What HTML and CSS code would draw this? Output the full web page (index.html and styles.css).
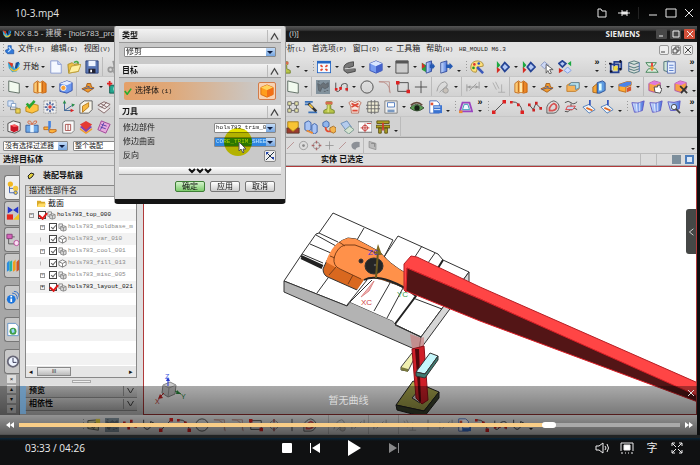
FILE: index.html
```html
<!DOCTYPE html>
<html lang="zh-CN">
<head>
<meta charset="utf-8">
<title>10-3.mp4</title>
<link rel="stylesheet" href="styles.css">
</head>
<body>
<svg class="sprite" aria-hidden="true">
<defs>
<linearGradient id="gOr" x2="1"><stop offset="0" stop-color="#ffd884"/><stop offset="1" stop-color="#e97813"/></linearGradient>
<linearGradient id="gBl" x2="1"><stop offset="0" stop-color="#cfe2ff"/><stop offset="1" stop-color="#4a74dc"/></linearGradient>
</defs>
<symbol id="nx" viewBox="0 0 16 16"><path d="M1 3l5 1 3 6 3-8 3 2-4 9-5 1-4-5z" fill="#35a7d8"/><path d="M1 2l6 2-1 5z" fill="#d93b24"/><path d="M3 8c1 6 8 8 12 0l-3 1-4 3z" fill="#f3c22f"/><path d="M10 3l4-1-3 8-2-1z" fill="#164b98"/></symbol>
<symbol id="part" viewBox="0 0 16 16"><path d="M5 1h5v5l4 2v6H4L1 11V8l4-1z" fill="#3279d8" stroke="#184fa0"/><path d="M6 3l3 4-4 4" fill="none" stroke="#bfe0ff" stroke-width="2"/></symbol>
<symbol id="new" viewBox="0 0 16 16"><path d="M2 1h8l4 4v10H2z" fill="#f4f8ff" stroke="#8698cf"/><path d="M10 1v4h4" fill="#c9d6f5" stroke="#8698cf"/></symbol>
<symbol id="open" viewBox="0 0 16 16"><path d="M1 5l5-2 2 2 5-1v9l-11 2z" fill="#eec146" stroke="#a98b26"/><path d="M2 15l3-8 11-2-3 8z" fill="#fff0a0" stroke="#b99a36"/><path d="M8 3q4-3 5 1" fill="none" stroke="#49a847" stroke-width="2"/></symbol>
<symbol id="save" viewBox="0 0 16 16"><path d="M1 1h14v14H1z" fill="#5a77b5" stroke="#293f78"/><path d="M4 1h8v6H4z" fill="#eef4ff"/><path d="M4 10h8v5H4z" fill="#223"/><path d="M6 11h2v3H6z" fill="#fff"/></symbol>
<symbol id="cut" viewBox="0 0 16 16"><path d="M7 1l2 9M13 3L6 10" stroke="#999" stroke-width="2"/><circle cx="4" cy="11" r="2.500" fill="none" stroke="#999" stroke-width="2"/><circle cx="10" cy="13" r="2" fill="none" stroke="#999" stroke-width="2"/></symbol>
<symbol id="stamp" viewBox="0 0 16 16"><path d="M5 2h6v3l-1 1v4l4 2v3H2v-3l4-2V6L5 5z" fill="#b8c548" stroke="#71812b"/><path d="M4 2h8v3H4z" fill="#d86b4e"/><path d="M7 6v8" stroke="#f8f5a0"/></symbol>
<symbol id="fit" viewBox="0 0 16 16"><path d="M0 1h16v14H0z" fill="#2667c4"/><path d="M1 4h14v10H1z" fill="#f7faff"/><path d="M4 6l8 6M12 6l-8 6" stroke="#e64b33" stroke-width="2" stroke-dasharray="3 4"/></symbol>
<symbol id="wedge" viewBox="0 0 16 16"><path d="M1 8q1-5 11-6v5l-6 2 8 1v3l-9 2-4-3z" fill="#777" stroke="#444"/><path d="M2 10l12-1" stroke="#ddd"/></symbol>
<symbol id="cube" viewBox="0 0 16 16"><path d="M1 4l7-3 7 3v8l-7 3-7-3z" fill="#789cf0" stroke="#3650b2"/><path d="M1 4l7-3 7 3-7 3z" fill="#d9e6ff"/><path d="M8 7l7-3v8l-7 3z" fill="#4462ca"/></symbol>
<symbol id="frame" viewBox="0 0 16 16"><path d="M1 1h14v14H1z" fill="#ccc" stroke="#444" stroke-width="1"/><path d="M1 1h14v3H1z" fill="#555"/></symbol>
<symbol id="clipr" viewBox="0 0 16 16"><path d="M1 3l5 3v8l-5-3z" fill="#2c9e3a"/><path d="M1 3l4 4-4 3z" fill="#d72c24"/><path d="M6 3l6-2v12l-6 2z" fill="url(#gBl)" stroke="#2f4897"/><path d="M10 5h3V3l3 4-3 4V9h-3z" fill="#2459b2"/></symbol>
<symbol id="clip" viewBox="0 0 16 16"><path d="M2 3l7-2v12l-7 2z" fill="url(#gBl)" stroke="#2f4897"/><path d="M8 5h4V3l4 4-4 4V9H8z" fill="#2459b2"/></symbol>
<symbol id="palette" viewBox="0 0 16 16"><path d="M1 7q1-6 8-6 7 1 6 6l-6 1-2 6Q0 14 1 7" fill="#ffe079" stroke="#a88a39"/><circle cx="5" cy="5" r="1.500" fill="#d33"/><circle cx="10" cy="4" r="1.500" fill="#25b"/><circle cx="4" cy="9" r="1.500" fill="#292"/><path d="M8 8l7 7" stroke="#3b59b9" stroke-width="3"/></symbol>
<symbol id="play1" viewBox="0 0 16 16"><path d="M1 1l4 5-4 4z" fill="#1aa840"/><path d="M1 8l4 3-4 4z" fill="#d52b21"/><path d="M6 8l4-5 5 5-5 5z" fill="#b4c9f5" stroke="#244394" stroke-width="2"/></symbol>
<symbol id="pick" viewBox="0 0 16 16"><path d="M1 6l4-4 5 4-5 4z" fill="#cdd8f6" stroke="#8492bd"/><path d="M7 5v10l2-3 2 4 2-1-2-4h4z" fill="#fff" stroke="#555"/></symbol>
<symbol id="swap" viewBox="0 0 16 16"><path d="M1 4l4-3 4 3-4 4z" fill="#b4c9f5" stroke="#244394" stroke-width="2"/><path d="M7 12l4-4 4 4-4 3z" fill="#cfddff" stroke="#7d9be0"/><path d="M15 1v6l-4-3z" fill="#1aa840"/><path d="M1 9l5 3-5 3z" fill="#d52b21"/></symbol>
<symbol id="sel" viewBox="0 0 16 16"><path d="M2 5h9v9H2zM6 2h8v8H6z" fill="none" stroke="#233f8e" stroke-width="2"/><path d="M5 7h5v5H5z" fill="#f0dc41"/><path d="M0 4h3M1 13h3M13 0v3M13 9v3" stroke="#112" stroke-width="2"/></symbol>
<symbol id="layers" viewBox="0 0 16 16"><path d="M2 3l6-2 6 2-6 2zM2 7l6 2 6-2M2 10l6 2 6-2M2 13l6 2 6-2" fill="#d4e6db" stroke="#476b70" stroke-width="1"/><path d="M2 3v10M14 3v10" stroke="#3a66aa"/></symbol>
<symbol id="layer2" viewBox="0 0 16 16"><path d="M1 3h12l-3 4H4zM4 10h8l3 4H1z" fill="#dcefdd" stroke="#3a7e51"/><path d="M8 3v9" stroke="#e33" stroke-width="2"/><circle cx="8" cy="9" r="2" fill="#e9a92e"/></symbol>
<symbol id="doc" viewBox="0 0 16 16"><path d="M1 2l6-1v13l-6-2z" fill="#cfe6d8" stroke="#476b70"/><path d="M5 2h9v13H5z" fill="#e8f0ff" stroke="#4f68ad"/><path d="M7 6h5M7 9h5M7 12h5" stroke="#4c73c9"/></symbol>
<symbol id="docr" viewBox="0 0 16 16"><path d="M2 1h8l3 3v11H2z" fill="#fff" stroke="#4265b8"/><path d="M6 6h10v9H6z" fill="#3a73d1"/><path d="M7 8h7M7 11h7" stroke="#fff"/><path d="M3 3h3v3H3z" fill="#e35335"/></symbol>
<symbol id="sheet" viewBox="0 0 16 16"><path d="M2 1l12 3v11L2 13z" fill="#f2faef" stroke="#55645a" stroke-width="1"/></symbol>
<symbol id="obox" viewBox="0 0 16 16"><path d="M1 4l4-3 3 2 3-2 4 3v10l-4 1-3-1-3 1-4-1z" fill="url(#gOr)" stroke="#c16818"/><path d="M5 2v12M11 2v12" stroke="#b65c13"/><path d="M7 3h2v11H7z" fill="#fff2bd"/></symbol>
<symbol id="bcube" viewBox="0 0 16 16"><path d="M1 4l8-3 6 2v9l-6 3-8-2z" fill="#6d98ef" stroke="#2d4ba8"/><path d="M1 4l8-3 6 2-6 3z" fill="#e0ebff"/><circle cx="5" cy="9" r="3" fill="#f6a136" stroke="#fff"/></symbol>
<symbol id="hump" viewBox="0 0 16 16"><path d="M1 10l5-2 1-4h4l1 4 3 1-7 5z" fill="#f19b2e" stroke="#a65b16"/><path d="M2 11l6-2 6 1M7 7l3 1" stroke="#36549e" stroke-width="1" fill="none"/></symbol>
<symbol id="teal" viewBox="0 0 16 16"><path d="M3 6h12v9H3z" fill="#26a58f" stroke="#0e594e"/><path d="M3 1v6M0 4h6" stroke="#d22" stroke-width="2"/><circle cx="10" cy="10" r="3" fill="#8fe0c8"/></symbol>
<symbol id="patt" viewBox="0 0 16 16"><path d="M0 0h16v16H0z" fill="#82929d"/><path d="M2 4l3 2 3-3 3 2 3-2v5l-4 2-3-2-2 5-2-1zM2 2h2M12 12h2M9 13h2" fill="#6a7278" stroke="#59626a"/></symbol>
<symbol id="spl" viewBox="0 0 16 16"><path d="M2 3v7q0 4 3 3t3-5 4-4 3 3v6" fill="none" stroke="#444" stroke-width="1"/><path d="M1 9h3v3H1zM6 8h3v3H6zM13 9h3v3h-3z" fill="#d22"/></symbol>
<symbol id="circ" viewBox="0 0 16 16"><circle cx="8" cy="8" r="7" fill="none" stroke="#444" stroke-width="1"/></symbol>
<symbol id="arc" viewBox="0 0 16 16"><path d="M1 2q12-1 13 13M1 2h12v12" fill="none" stroke="#b98d87" stroke-width="1"/></symbol>
<symbol id="rect" viewBox="0 0 16 16"><path d="M2 3h12v10H2z" fill="none" stroke="#444" stroke-width="1"/><path d="M0 1h4v4H0zM12 11h4v4h-4z" fill="#d22"/></symbol>
<symbol id="plus" viewBox="0 0 16 16"><path d="M8 1v14M1 8h14" stroke="#444" stroke-width="1"/></symbol>
<symbol id="gcurve" viewBox="0 0 16 16"><path d="M1 13q2-10 9-11 5 2 1 8l-4 4M4 14l9-8" fill="none" stroke="#999" stroke-width="1"/><circle cx="11" cy="12" r="3" fill="#c8c1b9" stroke="#999"/></symbol>
<symbol id="gdim" viewBox="0 0 16 16"><path d="M1 5v8M15 2v8M1 8h14M4 12l8-8" stroke="#999"/><path d="M2 8l3-2v4zM14 8l-3-2v4z" fill="#999"/></symbol>
<symbol id="gperp" viewBox="0 0 16 16"><path d="M1 3l4 8M4 2l4 8M7 14h8M11 5v9" stroke="#aaa" fill="none"/></symbol>
<symbol id="obl" viewBox="0 0 16 16"><path d="M1 6l5-3h9v7l-4 3H1z" fill="#f6b45b" stroke="#bd7a2a"/><path d="M6 3h9v6l-4 2V6H3z" fill="#b8e2ee" stroke="#5686a2"/></symbol>
<symbol id="mix" viewBox="0 0 16 16"><path d="M1 8l5-4v11l-5-1z" fill="#f7a636" stroke="#a5641c"/><path d="M6 3l6-2 3 2v9l-6 3H6z" fill="#5e9be0" stroke="#254b91"/><path d="M8 4h3v8H8z" fill="#dff"/></symbol>
<symbol id="bend" viewBox="0 0 16 16"><path d="M1 5l9-3h5v4l-6 2v6l-8-2z" fill="#ffac35" stroke="#bb6915"/><path d="M1 5l9-3h5v3l-7 3-7-1z" fill="#4b83e8"/><path d="M10 9l5-2v5l-5 2z" fill="#d7552d"/></symbol>
<symbol id="pcube" viewBox="0 0 16 16"><path d="M1 4l6-3 7 2v8l-7 3-6-2z" fill="#f6a245" stroke="#ad4cae"/><path d="M1 4l6-3 7 2-6 3z" fill="#df79dd"/><path d="M7 8h4v-2h3v3l2 1-2 5-6-1z" fill="#fff" stroke="#444"/></symbol>
<symbol id="xcube" viewBox="0 0 16 16"><path d="M1 4l6-3 7 2v8l-7 3-6-2z" fill="#f6a245" stroke="#ad4cae"/><path d="M1 4l6-3 7 2-6 3z" fill="#df79dd"/><path d="M7 7l8 8M15 7l-7 8" stroke="#333" stroke-width="2"/></symbol>
<symbol id="tree" viewBox="0 0 16 16"><path d="M1 1h6v6H1z" fill="#dce8fb" stroke="#7c9bc6"/><path d="M4 8v3h7v2M9 9h3" stroke="#777" fill="none"/><path d="M10 10h5v5h-5z" fill="#ecd355" stroke="#998529"/><path d="M5 4h5v4H5z" fill="#fff" stroke="#7c9bc6"/></symbol>
<symbol id="okbox" viewBox="0 0 16 16"><path d="M1 8l6-4 8 2v6l-7 3-7-2z" fill="#ffc442" stroke="#b3831f"/><path d="M2 4l3 4 6-7" stroke="#27a634" stroke-width="3" fill="none"/></symbol>
<symbol id="flower" viewBox="0 0 16 16"><path d="M1 1h14v14H1z" fill="#eee" stroke="#999" stroke-dasharray="2 1"/><circle cx="8" cy="8" r="2" fill="#d44"/><path d="M8 2v3M8 11v3M2 8h3M11 8h3M4 4l2 2M10 10l2 2M12 4l-2 2M4 12l2-2" stroke="#546ba0" stroke-width="2"/></symbol>
<symbol id="axes" viewBox="0 0 16 16"><path d="M4 2v10h9M4 12l9-6" fill="none" stroke="#345e91" stroke-width="1"/><path d="M2 4l2-4 2 4zM12 4l4 1-3 3z" fill="#2a8e48"/><path d="M11 10l4 2-4 2z" fill="#d22"/></symbol>
<symbol id="cubeY" viewBox="0 0 16 16"><path d="M1 5l5-4h9v10l-4 4H1z" fill="#f7f3e8" stroke="#555"/><path d="M4 14V7l7-4v5z" fill="#f8ba43" stroke="#b37618"/></symbol>
<symbol id="net" viewBox="0 0 16 16"><path d="M1 6l7-4 7 3-6 5zM1 10l7 5 7-6M4 4l7 4M11 3L5 8" fill="#f4eeee" stroke="#775a5a"/></symbol>
<symbol id="rcube" viewBox="0 0 16 16"><path d="M1 4l6-3 8 2v9l-6 3-8-2z" fill="#f2f2f2" stroke="#444"/><path d="M4 6l5-1 4 2v5l-5 2-4-2z" fill="#c61525"/><path d="M4 6l5-1 4 2-5 1z" fill="#ff6262"/></symbol>
<symbol id="gift" viewBox="0 0 16 16"><path d="M1 6h14v8H1z" fill="#6ea9e7" stroke="#345c9b"/><path d="M6 5h4v9H6z" fill="#e6f3ff"/><path d="M8 5Q1 4 4 1q3-1 4 4 2-5 5-4 2 3-5 4" fill="none" stroke="#d36841" stroke-width="1"/></symbol>
<symbol id="flow" viewBox="0 0 16 16"><path d="M1 8h5q2 0 2 3h7v2q-5 3-8 1v-3H1z" fill="#ffb63d" stroke="#bb651d"/><path d="M6 1h3v7l-3 5z" fill="#4683de"/></symbol>
<symbol id="bkt" viewBox="0 0 16 16"><path d="M2 3l3-2h10v11l-3 3H2z" fill="#f9f9f9" stroke="#777"/><path d="M5 5h6v7H5zM8 5v7" fill="none" stroke="#a54b48" stroke-width="1"/></symbol>
<symbol id="stack" viewBox="0 0 16 16"><path d="M1 8l7-4 7 4-7 6z" fill="#8442ad"/><path d="M1 5l7-4 7 4-7 6z" fill="#e43a32"/><path d="M1 9l7 5 7-5v2l-7 5-7-5z" fill="#f19d30"/></symbol>
<symbol id="purp" viewBox="0 0 16 16"><path d="M5 1l10 4-5 10-9-4z" fill="#e7a9dd" stroke="#9a3b91"/><path d="M5 5l6 2M4 8l6 2M8 3l-4 8" stroke="#493ba5" stroke-width="1"/></symbol>
<symbol id="nodes" viewBox="0 0 16 16"><path d="M2 2h4v4H2zM10 2h4v4h-4zM2 10h4v4H2zM10 10h4v4h-4zM6 4h4M6 12h4M4 6v4M12 6v4" fill="#e9e7a8" stroke="#666"/></symbol>
<symbol id="tool" viewBox="0 0 16 16"><path d="M1 2h9M1 5h7M5 14h10" stroke="#3870b8" stroke-width="2"/><path d="M5 4l9 9" stroke="#333" stroke-width="3"/><path d="M6 5l4 4" stroke="#f1c13f" stroke-width="2"/></symbol>
<symbol id="robot" viewBox="0 0 16 16"><path d="M1 3l3-2 4 2 4-2 3 2-2 4-1 8H4L3 7z" fill="#f6e7e0" stroke="#b7715f"/><path d="M4 4l8 4M12 4L4 8M5 12h6" stroke="#dc4936" stroke-width="2"/></symbol>
<symbol id="grid" viewBox="0 0 16 16"><path d="M2 2h12v12H2zM0 6h16M0 10h16M6 0v16M10 0v16" fill="#efecd5" stroke="#666"/></symbol>
<symbol id="disp" viewBox="0 0 16 16"><path d="M1 1h14v14H1z" fill="#eee" stroke="#777"/><path d="M4 3h8v5H4z" fill="#fff" stroke="#4d78bd"/><path d="M4 11h8v3H4z" fill="#7999c2"/></symbol>
<symbol id="eye" viewBox="0 0 16 16"><path d="M0 9q7-8 16 0-8 7-16 0" fill="#5b9b53" stroke="#344a2f"/><circle cx="8" cy="9" r="3" fill="#172217"/><path d="M1 6q7-6 13 0" fill="none" stroke="#60483a" stroke-width="2"/></symbol>
<symbol id="trap" viewBox="0 0 16 16"><path d="M4 3h8l3 10H1z" fill="none" stroke="#9b45c1" stroke-width="2"/><path d="M6 5h4l2 6H4z" fill="#f1f8ff" stroke="#2d9ab6"/><path d="M0 12h4v3H0z" fill="#ed8a37"/></symbol>
<symbol id="line" viewBox="0 0 16 16"><path d="M2 14L14 2" stroke="#444" stroke-width="1"/><path d="M0 12h4v4H0zM12 0h4v4h-4z" fill="#d22"/></symbol>
<symbol id="arc2" viewBox="0 0 16 16"><path d="M2 2q10 0 12 11" fill="none" stroke="#444"/><path d="M0 1h3v3H0zM8 4h3v3H8zM12 12h4v4h-4z" fill="#d22"/></symbol>
<symbol id="zig" viewBox="0 0 16 16"><path d="M1 5l5 6 3-7 5 5" fill="none" stroke="#444"/><path d="M0 4h3v3H0zM5 10h3v3H5zM8 2h3v3H8zM13 8h3v3h-3z" fill="#c22"/></symbol>
<symbol id="off" viewBox="0 0 16 16"><path d="M1 15V8q2-6 8-7 6 2 6 7-1 6-6 7z" fill="none" stroke="#555" stroke-width="1"/><path d="M4 12V9q2-4 5-5 3 1 3 4t-4 4z" fill="none" stroke="#d75151" stroke-width="2"/></symbol>
<symbol id="proj" viewBox="0 0 16 16"><path d="M1 3q4-3 7 0t7-1M1 13q4 2 6-2t8 0M8 4v8" fill="none" stroke="#444"/><path d="M4 7h9l-3 4H2z" fill="#bfdaf1" stroke="#d33"/></symbol>
<symbol id="plane" viewBox="0 0 16 16"><path d="M1 8l7-3 7 6-7 4z" fill="#f0f4f8" stroke="#4276b8"/><path d="M5 9l7 3" stroke="#e26821" stroke-width="2"/><path d="M9 0v6" stroke="#3455bd" stroke-width="2"/></symbol>
<symbol id="surf" viewBox="0 0 16 16"><path d="M1 3q7 2 14-2l-2 11q-5 2-9 2z" fill="url(#gBl)" stroke="#5a55c4"/><path d="M6 4l1 10M10 3v10" fill="none" stroke="#eef"/></symbol>
<symbol id="mag" viewBox="0 0 16 16"><path d="M1 2q7 2 14-1l-1 9q-5 3-10 2z" fill="url(#gBl)" stroke="#5a55c4"/><circle cx="8" cy="8" r="3" fill="#e8f4ff" stroke="#444"/><path d="M10 10l5 5" stroke="#444" stroke-width="2"/></symbol>
<symbol id="mold" viewBox="0 0 16 16"><path d="M1 9h14v6H1z" fill="#9a3b2e" stroke="#58382b"/><path d="M2 2h12v6l-6 5-6-5z" fill="#f7c433" stroke="#a77b16"/></symbol>
<symbol id="pair" viewBox="0 0 16 16"><path d="M1 3l4-2 3 2v8l-4 2-3-2z" fill="#a9c4f4" stroke="#355ba8"/><path d="M9 6l3-2 3 2v8l-3 2-3-2z" fill="#a9c4f4" stroke="#355ba8"/><path d="M3 12l7 3" stroke="#f18b2e" stroke-width="2"/></symbol>
<symbol id="link" viewBox="0 0 16 16"><path d="M1 3l4-2 3 2v4L5 9 1 7z" fill="#90b6ed" stroke="#3e64a7"/><path d="M9 9l4-2 3 2v4l-3 2-4-2z" fill="#f3b54f" stroke="#a46b25"/><path d="M4 8q0 6 6 5" fill="none" stroke="#e34c30" stroke-width="2"/></symbol>
<symbol id="eras" viewBox="0 0 16 16"><path d="M1 4l7-3 5 7-6 4z" fill="#b5cced" stroke="#6589b5"/><path d="M5 12l6-5 5 4-6 5z" fill="#d4e3d0" stroke="#72948b"/></symbol>
<symbol id="targ" viewBox="0 0 16 16"><path d="M0 2h16v12H0z" fill="#fafafa" stroke="#666"/><circle cx="8" cy="9" r="3" fill="none" stroke="#c53735"/><path d="M8 4v10M3 9h10M10 4h5" stroke="#c53735"/></symbol>
<symbol id="gate" viewBox="0 0 16 16"><path d="M1 1h14v3H1zM0 6h16v3H0zM3 9h3v6H3zM10 9h3v6h-3z" fill="#b0a322" stroke="#5a4f15"/><path d="M7 3h2v9H7z" fill="#d13a2c"/></symbol>
<symbol id="gball" viewBox="0 0 16 16"><circle cx="8" cy="8" r="6" fill="none" stroke="#888"/><circle cx="8" cy="8" r="2" fill="#888"/></symbol>
<symbol id="gcross" viewBox="0 0 16 16"><circle cx="8" cy="8" r="5" fill="none" stroke="#888"/><path d="M8 1v4M8 11v4M1 8h4M11 8h4" stroke="#a66" stroke-width="2"/></symbol>
<symbol id="gplus" viewBox="0 0 16 16"><path d="M8 2v12M2 8h12" stroke="#888"/></symbol>
<symbol id="gline" viewBox="0 0 16 16"><path d="M3 13L13 3" stroke="#a77" stroke-width="1"/></symbol>
<symbol id="gblob" viewBox="0 0 16 16"><path d="M2 7q3-6 12-4v7q-5 0-6 4-6 0-6-7" fill="#8c9096"/></symbol>
<symbol id="gbox" viewBox="0 0 16 16"><path d="M3 2l10 3v9L3 11z" fill="#bbb" stroke="#888"/><path d="M6 5h5v5" fill="none" stroke="#777"/></symbol>
<symbol id="sketch" viewBox="0 0 16 16"><path d="M1 3l12-1v12l-12-2z" fill="#cbc99f" stroke="#555"/><path d="M3 9l7-4-2 7z" fill="none" stroke="#555"/><path d="M10 1h5v5h-5z" fill="#e5d443"/></symbol>
<symbol id="uu" viewBox="0 0 16 16"><path d="M3 2v8q4 6 8 0V4l4 2" fill="none" stroke="#333" stroke-width="1"/></symbol>
<symbol id="file" viewBox="0 0 10 10"><path d="M1 1h4v5H1z" fill="#eee" stroke="#888"/><path d="M3 4l3-1 3 1v4L6 9 3 8zM3 4l3 1 3-1M6 5v4" fill="#ddd" stroke="#888"/></symbol>
<symbol id="tcube" viewBox="0 0 10 10"><path d="M1 3l4-2 4 2v4L5 9 1 7zM1 3l4 2 4-2M5 5v4" fill="#fff" stroke="#777"/></symbol>
<symbol id="folder" viewBox="0 0 10 10"><path d="M0 2h4l1 1h4v6H0z" fill="#d9a928"/><path d="M2 5h8L8 9H0z" fill="#ffdc68"/></symbol>
</svg>

<div class="player">
  <header class="player-head">
    <h1>10-3.mp4</h1>
    <div class="win">
      <button aria-label="打开"><svg viewBox="0 0 12 12"><path d="M2 2h3l1 2h4v6H2z"/></svg></button>
      <button aria-label="置顶"><svg viewBox="0 0 12 12"><path d="M0 6h4M4 3v6M9 3v6M9 6h3"/><path d="M4 5h5v2H4z" fill="#eee"/></svg></button>
      <i></i>
      <button aria-label="最小化"><svg viewBox="0 0 12 12"><path d="M2 8h8"/></svg></button>
      <button aria-label="最大化"><svg viewBox="0 0 12 12"><path d="M1 2h10v8H1z"/></svg></button>
      <button aria-label="关闭"><svg viewBox="0 0 12 12"><path d="M2 2l8 8M10 2l-8 8"/></svg></button>
    </div>
  </header>

  <main class="stage">
    <div class="nx-title"><svg class="ic"><use href="#nx"/></svg><span class="name">NX 8.5 - 建模 - [hols783_prod</span><span class="mod">(I)]</span><b>SIEMENS</b>
      <div class="nx-win"><button aria-label="最小化"><svg viewBox="0 0 10 10"><path d="M2 7h4"/></svg></button><button aria-label="还原"><svg viewBox="0 0 10 10"><path d="M2 2h6v6H2z"/></svg></button><button class="x" aria-label="关闭"><svg viewBox="0 0 10 10"><path d="M2 2l6 6M8 2L2 8"/></svg></button></div>
    </div>
    <nav class="menu">
      <div class="left"><i class="grip"></i><svg class="ic"><use href="#part"/></svg><a href="#">文件<span>(F)</span></a><a href="#">编辑<span>(E)</span></a><a href="#">视图<span>(V)</span></a></div>
      <a href="#">分析<span>(L)</span></a><a href="#">首选项<span>(P)</span></a><a href="#">窗口<span>(O)</span></a><a href="#"><span>GC </span>工具箱</a><a href="#">帮助<span>(H)</span></a><a href="#"><span>HB_MOULD M6.3</span></a>
      <div class="doc-win"><button aria-label="最小化"><svg viewBox="0 0 10 10"><path d="M2 7h4"/></svg></button><button aria-label="还原"><svg viewBox="0 0 10 10"><path d="M2 4h4v4H2zM4 4V2h4v4H6"/></svg></button><button aria-label="关闭"><svg viewBox="0 0 10 10"><path d="M2 2l6 6M8 2L2 8"/></svg></button></div>
    </nav>
    <div class="row"><div class="left" data-tools=": nx 开始 v new open save | cut"></div><div class="right" data-tools="stamp v . : fit v wedge v cube v frame v clipr clip . : palette _ play1 v play1 pick swap ~ > : sel layers layer2 doc _ >"></div></div>
    <div class="row"><div class="left" data-tools=": sheet v obox v bcube | hump v teal"></div><div class="right" data-tools="_ sheet v | patt spl v circ arc rect plus | gcurve v | gdim v gperp | obox v hump v obl v mix v bend v | pcube v xcube ."></div></div>
    <div class="row"><div class="left" data-tools=": tree okbox flower axes cubeY net"></div><div class="right" data-tools="_ nodes tool stamp v robot grid disp v eye docr . : trap > : line arc2 zig off proj plane plane . : surf surf mag ~ >"></div></div>
    <div class="row short"><div class="left" data-tools=": rcube gift flow bkt stack purp"></div><div class="right" data-tools="_ mold pair link eras targ gate ."></div></div>
    <div class="filter">
      <div class="left"><span class="pickbox a"><select aria-label="过滤器"><option>没有选择过滤器</option></select></span><span class="pickbox b"><select aria-label="范围"><option>整个装配</option></select></span></div>
      <div class="right small" data-tools="_ gline gball gcross gplus gline gblob | gbox ~ ."></div>
    </div>
    <div class="status"><b class="prompt">选择目标体</b><b class="msg">实体 已选定</b><span></span><span></span><em class="p1"></em><em class="p2"></em></div>

    <div class="work">
      <div class="tabs">
        <button class="on" aria-label="装配"><svg viewBox="0 0 16 16"><path d="M4 5v9h7M4 9h7" stroke="#3a5aa8" fill="none"/><circle cx="5" cy="4" r="3" fill="#f3b71e"/><circle cx="11" cy="9" r="3" fill="#f3c83c"/><circle cx="11" cy="14" r="2" fill="#f3c83c" stroke="#46a"/></svg></button>
        <button aria-label="约束"><svg viewBox="0 0 16 16"><path d="M2 0l6 4 6-4v8L8 4 2 8z" fill="#2637c8"/><path d="M1 9h7v6H1z" fill="#e5291e"/><path d="M8 15l7-7v7z" fill="#f0c51d"/></svg></button>
        <button aria-label="部件"><svg viewBox="0 0 16 16"><path d="M3 5v8h8M6 5h4" stroke="#555" fill="none"/><path d="M1 2h6v5H1z" fill="#d363b8" stroke="#843c76"/><circle cx="12" cy="12" r="3" fill="#f8dff2" stroke="#b64596"/></svg></button>
        <button aria-label="重用库"><svg viewBox="0 0 16 16"><path d="M1 5l3-3v11l-3 2z" fill="#298de0"/><path d="M4 4l3-2v12l-3 1z" fill="#29b39b"/><path d="M8 4l3-3v12l-3 2z" fill="#f19f1b"/><path d="M12 4l3-3v12l-3 2z" fill="#cf5324"/></svg></button>
        <button class="sp" aria-label="信息"><svg viewBox="0 0 16 16"><circle cx="6" cy="10" r="5" fill="#1c75dc"/><path d="M6 9v4M6 6v2" stroke="#fff" stroke-width="2"/><path d="M7 3q6 0 6 7M9 1q6 0 6 7" fill="none" stroke="#2767c8" stroke-width="1"/></svg></button>
        <button class="sp" aria-label="网页"><svg viewBox="0 0 16 16"><path d="M2 1h9l3 3v11H2z" fill="#fff" stroke="#5a8fc5"/><circle cx="8" cy="10" r="4" fill="#3e9e48"/><path d="M6 8l3-1 1 4-3 1z" fill="#9bd3ff"/></svg></button>
        <button class="sp" aria-label="历史"><svg viewBox="0 0 16 16"><circle cx="8" cy="8" r="6" fill="#eef4ff" stroke="#667" stroke-width="2"/><path d="M8 4v5h4" stroke="#224" fill="none"/></svg></button>
        <i>×</i><i>▴</i><i>▾</i><i>▾</i>
      </div>
      <section class="nav">
        <h2><svg viewBox="0 0 10 10"><path d="M2 5l3-3 3 1-2 3-3 2z" fill="#e5d13c" stroke="#222"/></svg>装配导航器</h2>
        <div class="treebox">
          <h3>描述性部件名</h3>
          <ul>
            <li class="l0"><svg><use href="#folder"/></svg><b>截面</b></li>
            <li class="l0 t"><s>−</s><input type="checkbox" id="c0" checked class="red"><svg><use href="#file"/></svg><label for="c0">hols783_top_000</label></li>
            <li class="l1 dim"><s>+</s><input type="checkbox" id="c1" checked><svg><use href="#file"/></svg><label for="c1">hols783_moldbase_m</label></li>
            <li class="l1 dim"><s class="n"></s><input type="checkbox" id="c2" checked><svg><use href="#tcube"/></svg><label for="c2">hols783_var_010</label></li>
            <li class="l1 dim"><s>+</s><input type="checkbox" id="c3" checked><svg><use href="#file"/></svg><label for="c3">hols783_cool_001</label></li>
            <li class="l1 dim"><s class="n"></s><input type="checkbox" id="c4" checked><svg><use href="#tcube"/></svg><label for="c4">hols783_fill_013</label></li>
            <li class="l1 dim"><s>+</s><input type="checkbox" id="c5" checked><svg><use href="#file"/></svg><label for="c5">hols783_misc_005</label></li>
            <li class="l1"><s>+</s><input type="checkbox" id="c6" checked class="red"><svg><use href="#file"/></svg><label for="c6">hols783_layout_021</label></li>
          </ul>
          <div class="hbar"><span>◂</span><i>III</i><span class="r">▸</span></div>
        </div>
        <div class="split"></div>
        <h4>预览<svg viewBox="0 0 10 10"><path d="M2 2l3 5 3-5"/></svg></h4>
        <h4>相依性<svg viewBox="0 0 10 10"><path d="M2 2l3 5 3-5"/></svg></h4>
      </section>
      <div class="view">
        <svg class="scene" viewBox="144 168 552 246" preserveAspectRatio="xMinYMin meet">
          <g stroke="#333" stroke-width="1" stroke-linejoin="round">
            <path d="M284 282L302 255L316 235L319 234L333 214L393 241L384 258L398 237L438 255L443 261L469 273L421 338L396 326L393 322L350 303L347 307Z" fill="#fff"/>
            <path d="M284 282L347 307L350 303L393 322L396 326L421 338L419 352L284 293Z" fill="#b3b3b3"/>
            <path d="M421 338L469 273V284L419 352Z" fill="#d6d6d6"/>
            <path d="M319 234L338 243M316 236L336 247M310 245L331 254M302 255L323 264M364 229L354 246M317 294L328 279M422 247L407 270M435 254L423 271" fill="none"/>
            <path d="M301 257L323 267M301 259L322 269M443 261L438 269" fill="none" stroke="#222" stroke-width="2"/>
            <path d="M384 258Q391 270 405 276" fill="none" stroke="#222" stroke-width="2"/>
            <path d="M323 270Q326 262 331 255Q335 243 348 239L356 240L380 253Q388 264 407 275L409 290L415 296Q404 288 388 283Q372 279 366 282L357 291L330 279Q323 277 323 270Z" fill="#d9681f"/>
            <path d="M326 263Q332 243 348 239L356 240L380 253Q388 264 407 275L409 291Q394 283 382 280L364 281L335 268Z" fill="#ff914a" stroke="none"/>
            <path d="M361 280L340 270Q333 267 334 259Q337 248 345 246L355 246L379 255M339 243L345 247M330 257L335 259M329 276L336 268M348 285L353 276" fill="none" stroke="#7c3e18"/>
            <path d="M364 281Q373 277 390 284Q404 288 416 297L395 325L393 322L350 303L347 305Z" fill="#fff" stroke="none"/>
            <path d="M367 281L347 306M372 281L350 303M390 284L374 312M403 289L387 319M413 299L442 310M395 326L421 338" fill="none"/>
            <path d="M364 281Q373 276 390 282Q404 287 416 297L395 325" fill="none" stroke="#222" stroke-width="2"/>
            <circle cx="361" cy="262" r="2" fill="#322"/>
            <ellipse cx="374" cy="267" rx="9" ry="8" fill="#252525"/>
            <circle cx="375" cy="266" r="1" fill="#fff"/>
          </g>
          <path d="M361 298L374 282L369 292Z" fill="#f3b6b6" stroke="#d88"/>
          <path d="M376 279L378 252" stroke="#6b5b20" stroke-width="2"/><path d="M375 256L378 245L382 256Z" fill="#7d6a20"/>
          <text x="368" y="256" fill="#4a35d8">ZC</text><text x="361" y="306" fill="#d24444">XC</text><text x="397" y="298" fill="#3a9a48">YC</text>
          <path d="M410 335L421 339L424 338L424 350L412 349Z" fill="#c98080" opacity=".7"/>
          <path d="M401 368L412 354L416 356L408 372L401 371Z" fill="#f0efb0" stroke="#444"/>
          <path d="M401 368L408 370V373L401 371Z" fill="#79793c"/>
          <path d="M396 406L413 382L439 393L424 412Z" fill="#aaa84e" stroke="#222"/>
          <path d="M396 406L424 412L439 393V399L424 418L397 411Z" fill="#3e4630" stroke="#222"/>
          <path d="M412 399L418 392L427 396L420 404Z" fill="#ddd" stroke="#333"/>
          <path d="M412 350L424 347L428 401L422 405L416 399Z" fill="#cf1f27" stroke="#8d1018"/><path d="M415 350L419 402L421 403L419 350Z" fill="#50090c"/>
          <path d="M416 373L430 354L438 357L425 375Z" fill="#c5f7fb" stroke="#333"/><path d="M416 373L425 375L438 357V361L425 379L416 377Z" fill="#3c7b72" stroke="#333"/>
          <path d="M404 265L411 257L417 258L480 288L698 384V398L480 300L407 269L406 293L404 291Z" fill="#ff4545" stroke="#b52026"/>
          <path d="M407 269L480 300L698 397V403L480 322L406 292Z" fill="#531516" stroke="#dc2028"/>
          <g transform="translate(168 390)"><path d="M-5 -4L2 -7L8 -4L7 5L0 8L-6 4Z" fill="#ccc" stroke="#888"/><path d="M-5 -4L1 -1L8 -4M1 -1L0 8" fill="none" stroke="#999"/><path d="M0 -3V-10" stroke="#2638d0"/><path d="M-2 -8L0 -12L2 -8Z" fill="#2638d0"/><path d="M-4 4L-9 9" stroke="#c22"/><path d="M-10 10L-8 5L-5 9Z" fill="#c22"/><path d="M7 2L13 5" stroke="#2a8c3c"/><path d="M9 1L13 5L8 5Z" fill="#2a8c3c"/></g>
          <text x="165" y="380" fill="#3a55e0" class="ax">Z</text><text x="155" y="405" fill="#c33" class="ax">X</text><text x="181" y="400" fill="#2a8c3c" class="ax">Y</text>
        </svg>
        <button class="drawer" aria-label="展开"><svg viewBox="0 0 10 12"><path d="M8 2L3 6l5 4"/></svg></button>
      </div>
    </div>
    <div class="row bottom" data-tools="__ : sketch patt zig uu line arc2 circ arc arc rect gcross plus off _ | gcurve gdim | gdim _ | gperp gplus gdim docr arc2 spl uu ."></div>

    <form class="dialog">
      <fieldset><legend>类型<svg viewBox="0 0 10 10"><path d="M2 8l3-5 3 5"/></svg></legend>
        <div class="body type"><span class="pickbox"><select aria-label="类型"><option>修剪</option></select></span></div></fieldset>
      <fieldset><legend>目标<svg viewBox="0 0 10 10"><path d="M2 8l3-5 3 5"/></svg></legend>
        <div class="body"><div class="target"><svg class="tick" viewBox="0 0 10 10"><path d="M1 5l3 4 5-7"/></svg><span>选择体 <small>(1)</small></span><button type="button" aria-label="体"><svg viewBox="0 0 16 16"><path d="M1 4l7-3 7 3v8l-7 3-7-3z" fill="#ff9d1c" stroke="#d8690d"/><path d="M1 4l7-3 7 3-7 3z" fill="#ffd35c"/><path d="M8 7l7-3v8l-7 3z" fill="#f36f16"/></svg></button></div></div></fieldset>
      <fieldset><legend>刀具<svg viewBox="0 0 10 10"><path d="M2 8l3-5 3 5"/></svg></legend>
        <div class="body cutter">
          <label for="d1">修边部件</label><span class="pickbox"><select id="d1"><option>hols783_trim_0</option></select></span>
          <label for="d2">修边曲面</label><span class="pickbox hot"><select id="d2"><option>CORE_TRIM_SHEE</option></select></span>
          <label for="d3">反向</label><button type="button" id="d3" class="rev"><svg viewBox="0 0 10 10"><path d="M1 9l8-8M2 2l6 6" stroke="#234" /><path d="M6 6l3 0 0 3zM1 1h3L1 4z" fill="#2446b0"/></svg></button>
        </div></fieldset>
      <div class="more"><svg viewBox="0 0 26 6"><path d="M2 1l3 3 3-3M10 1l3 3 3-3M18 1l3 3 3-3"/></svg></div>
      <div class="acts"><button type="button" class="ok">确定</button><button type="button">应用</button><button type="button">取消</button></div>
      <div class="spot"></div>
      <svg class="cursor" viewBox="0 0 8 12"><path d="M1 1v9l2-2 2 4 1-1-1-3h3z"/></svg>
    </form>

    <div class="caption"><span>暂无曲线</span><button aria-label="关闭"><svg viewBox="0 0 8 8"><path d="M1 1l6 6M7 1L1 7"/></svg></button></div>
    <div class="seek"><button aria-label="快退"><svg viewBox="0 0 10 8"><path d="M5 1v6L1 4zM9 1v6L5 4z"/></svg></button><input type="range" min="0" max="266" value="215" aria-label="进度"><button aria-label="快进"><svg viewBox="0 0 10 8"><path d="M1 1v6l4-3zM5 1v6l4-3z"/></svg></button></div>
  </main>

  <footer class="controls">
    <span class="time">03:33 / 04:26</span>
    <div class="mid">
      <button aria-label="停止"><svg viewBox="0 0 16 16"><rect x="3" y="3" width="10" height="10" rx="1"/></svg></button>
      <button aria-label="上一个"><svg viewBox="0 0 16 16"><path d="M3 3h1v10H3zM13 3v10L5 8z"/></svg></button>
      <button aria-label="播放"><svg viewBox="0 0 16 16"><path d="M2 0l13 8-13 8z"/></svg></button>
      <button aria-label="下一个" class="off"><svg viewBox="0 0 16 16"><path d="M12 3h1v10h-1zM3 3v10l8-5z"/></svg></button>
    </div>
    <div class="end">
      <button aria-label="音量"><svg viewBox="0 0 14 14"><path d="M1 5h3l4-3v10L4 9H1zM10 5q2 2 0 4M12 3q3 4 0 8"/></svg></button>
      <button aria-label="画面"><svg viewBox="0 0 14 14"><path d="M1 10V2h12v8M1 12h2M5 12h1M8 12h1M11 12h2"/><path d="M4 4h6v5H4z" fill="#fff"/></svg></button>
      <button>字</button>
      <button aria-label="全屏"><svg viewBox="0 0 14 14"><path d="M2 5V2h3M9 2h3v3M12 9v3H9M5 12H2V9M2 2l4 4M12 2L8 6M12 12L8 8M2 12l4-4"/></svg></button>
    </div>
  </footer>
</div>
<script src="toolbars.js"></script>
</body>
</html>
```
FILE: toolbars.js
```js
// Builds each toolbar from its list of tokens: icon names, separators, grips and arrows.
const marks = { ':': 'grip', '|': 'sep', v: 'down', '.': 'tail', '_': 'gap', '__': 'indent', '~': 'spring', '>': 'over' };

document.querySelectorAll('[data-tools]').forEach((bar) => {
  bar.dataset.tools.split(' ').forEach((token) => {
    if (marks[token]) {
      const mark = document.createElement('i');
      mark.className = marks[token];
      if (token === '>') mark.textContent = '»';
      bar.append(mark);
      return;
    }
    const button = document.createElement('button');
    button.className = 'tool';
    if (token === '开始') {
      button.classList.add('word');
      button.textContent = token;
    } else {
      button.setAttribute('aria-label', token);
      button.innerHTML = `<svg><use href="#${token}"/></svg>`;
    }
    bar.append(button);
  });
});
```
FILE: styles.css
```css
* { box-sizing: border-box; }
body { margin: 0; background: #111; font: 8px/12px "Liberation Sans", "Noto Sans CJK SC", sans-serif; color: #111; }
button { border: 0; padding: 0; margin: 0; background: none; font: inherit; color: inherit; display: flex; align-items: center; justify-content: center; }
h1, h2, h3, h4, ul, fieldset, legend { margin: 0; padding: 0; border: 0; list-style: none; font-size: inherit; }
svg { display: block; flex: none; }
i, em { font-style: normal; }
.sprite { position: absolute; width: 0; height: 0; }

.player { height: 100vh; display: flex; flex-direction: column; background: #0d0e0f; }
.player-head { height: 26px; flex: none; display: flex; align-items: center; justify-content: space-between; padding: 0 5px 0 15px; background: linear-gradient(#000, #0b0c0c); color: #e4e4e4; }
.player-head h1 { font: 10px/14px "Open Sans", "Noto Sans", sans-serif; }
.win { display: flex; align-items: center; gap: 6px; }
.win svg { width: 12px; height: 12px; fill: none; stroke: #e8e8e8; }
.win button:first-child { margin-right: 4px; }
.win i { width: 1px; height: 12px; background: #222; margin: 0 2px; }

.stage { flex: 1; min-height: 0; position: relative; display: flex; flex-direction: column; margin-right: 3px; background: #d6d6d6; }
.ic { width: 10px; height: 10px; }
.nx-title { height: 16px; flex: none; display: flex; align-items: center; padding: 0 2px; gap: 2px; color: #ccc; background: linear-gradient(#555, #3a3a3a 25%, #181818 35%, #1d1d1d); }
.nx-title .name { width: 273px; white-space: nowrap; overflow: hidden; }
.nx-title b { margin-left: auto; margin-right: 14px; color: #eee; font: bold 8px/10px "Open Sans", "Liberation Sans", sans-serif; }
.nx-win, .doc-win { display: flex; gap: 3px; }
.nx-win button { width: 11px; height: 10px; background: #484848; border-radius: 1px; }
.nx-win .x { background: #d4503a; }
.nx-win svg, .doc-win svg { width: 10px; height: 10px; fill: none; stroke: #eee; }
.menu { height: 15px; flex: none; display: flex; align-items: center; gap: 6px; background: #e3e3e3; padding-right: 4px; }
.menu .left { margin-right: -3px; gap: 6px; align-items: center; }
.menu .ic { margin: 0 -3px 0 -6px; }
.menu a { color: #222; text-decoration: none; white-space: nowrap; }
.menu a span, .target small { font: 6px/12px "Liberation Mono", monospace; }
.menu .doc-win { margin-left: auto; gap: 2px; }
.doc-win button { width: 10px; height: 10px; background: #eee; border: 1px solid #999; border-radius: 2px; }
.doc-win svg { stroke: #444; }

.left { width: 276px; flex: none; display: flex; }
.right { flex: 1; min-width: 0; display: flex; }
.row { height: 20px; flex: none; display: flex; align-items: stretch; background: linear-gradient(#e2e2e2, #d2d2d2); border-bottom: 1px solid #c6c6c6; }
.row.short .right { flex: none; border-right: 1px solid #bbb; }
.row.short { background: #d2d2d2; }
.tool { width: 18px; flex: none; }
.tool svg { width: 14px; height: 14px; }
.tool.word { width: 16px; font-size: 8px; }
.grip { width: 5px; flex: none; margin: 4px 0; }
.row .grip, .menu .grip { background: repeating-linear-gradient(#999 0 1px, transparent 1px 3px) 3px 0 / 1px 100% no-repeat; }
.menu .grip { height: 11px; margin: 0; }
.sep { width: 4px; flex: none; background: linear-gradient(#bbb, #bbb) 1px 0 / 1px 100% no-repeat; }
.down, .tail { width: 8px; flex: none; display: flex; align-items: center; justify-content: center; }
.tail { align-items: flex-end; padding-bottom: 4px; }
.down::after, .tail::after { content: ""; border: 2px solid transparent; border-top-color: #222; border-bottom: 0; }
.gap { width: 8px; flex: none; }
.indent { width: 80px; flex: none; }
.spring { flex: 1; }
.over { width: 10px; flex: none; font: bold 9px/10px "Liberation Sans", sans-serif; position: relative; text-align: center; }
.over::after { content: ""; position: absolute; left: 3px; bottom: 4px; border: 2px solid transparent; border-top-color: #222; border-bottom: 0; }

.filter { height: 16px; flex: none; display: flex; border-top: 1px solid #999; background: #dcdcdc; }
.filter .left { align-items: center; gap: 5px; padding-left: 3px; }
.filter .a { width: 65px; }
.filter .b { width: 110px; }
.small .tool { width: 13px; }
.small .tool svg { width: 11px; height: 11px; }
.small .tail { padding-bottom: 3px; }
.pickbox { position: relative; display: block; height: 10px; min-width: 0; }
.pickbox select { appearance: none; display: block; width: 100%; height: 10px; padding: 0 11px 0 1px; margin: 0; border: 1px solid #888; border-radius: 1px; background: #fff; color: #222; font: 7px/8px "Liberation Mono", "Noto Sans CJK SC", monospace; overflow: hidden; }
.pickbox::after { content: ""; position: absolute; right: 1px; top: 1px; bottom: 1px; width: 9px; background: linear-gradient(135deg, transparent 50%, #0c1c40 50%) 1px 3px / 0 0 no-repeat, linear-gradient(#c4dcf8, #75a5df); pointer-events: none; }
.pickbox::before { content: ""; position: absolute; z-index: 1; right: 3px; top: 4px; border: 3px solid transparent; border-top-color: #0c1c40; border-bottom: 0; pointer-events: none; }
.pickbox { isolation: isolate; }
.status { height: 13px; flex: none; display: flex; align-items: center; border-top: 1px solid #bbb; border-bottom: 1px solid #aaa; background: #dcdcdc; gap: 4px; padding: 0 3px; }
.status .prompt { width: 314px; }
.status .msg { margin-right: auto; }
.status span { width: 12px; height: 11px; border-left: 1px solid #bbb; }
.status em { width: 9px; height: 9px; background: #7d8f9c; }
.status .p2 { background: #dbe8f8; border: 2px solid #4b7dbb; }

.work { flex: 1; min-height: 0; display: flex; }
.tabs { width: 20px; flex: none; padding: 9px 0 0 4px; background: #a7a7a7; border-right: 1px solid #888; overflow: hidden; }
.tabs button { width: 16px; height: 25px; margin-bottom: 1px; background: #c8c8c8; border: 1px solid #777; border-right: 0; border-radius: 3px 0 0 3px; }
.tabs .on { background: #eee; }
.tabs .sp { margin-top: 7px; }
.tabs svg { width: 14px; height: 15px; }
.tabs i { display: block; width: 9px; height: 8px; margin: 0 0 2px 3px; background: #ddd; font-size: 6px; line-height: 8px; text-align: center; }
.nav { width: 123px; flex: none; display: flex; flex-direction: column; padding: 0 6px 4px 5px; background: #dfdfdf; }
.nav h2 { height: 19px; flex: none; display: flex; align-items: center; gap: 7px; }
.nav h2 svg { width: 10px; height: 10px; margin-left: 1px; }
.nav h3 { height: 11px; line-height: 10px; padding-left: 3px; font-weight: normal; background: #d5d5d5; border-bottom: 1px solid #999; }
.treebox { flex: 1; min-height: 0; display: flex; flex-direction: column; border: 1px solid #888; background: repeating-linear-gradient(#fff 0 12px, #f2f2f2 12px 24px) 0 11px; overflow: hidden; }
.treebox li { height: 12px; display: flex; align-items: center; gap: 1px; white-space: nowrap; font: 6px/12px "Liberation Mono", "Noto Sans CJK SC", monospace; }
.treebox li b { font: 8px/12px "Noto Sans CJK SC", sans-serif; margin-left: 1px; }
.treebox li svg { width: 9px; height: 9px; }
.treebox .l0 { padding-left: 11px; }
.treebox .t { padding-left: 3px; }
.treebox .l1 { padding-left: 14px; }
.treebox s { width: 5px; height: 5px; margin-right: 3px; border: 1px solid #999; font-size: 5px; line-height: 3px; text-align: center; text-decoration: none; }
.treebox .n { border-color: transparent; border-left-color: #bbb; }
.treebox input { appearance: none; width: 8px; height: 8px; margin: 0; border: 1px solid #444; background: #fff; position: relative; flex: none; }
.treebox input:checked::before { content: ""; position: absolute; left: 2px; top: 0; width: 2px; height: 4px; border: solid #666; border-width: 0 1px 1px 0; transform: rotate(40deg); }
.treebox .red:checked::before { border-color: #e01818; border-width: 0 2px 2px 0; width: 4px; height: 6px; left: 1px; top: -1px; }
.dim { color: #888; }
.hbar { height: 11px; flex: none; display: flex; align-items: center; margin-top: auto; padding: 0 3px; background: #e6e6e6; font-size: 7px; }
.hbar i { width: 34px; height: 9px; margin-left: 4px; border: 1px solid #888; background: linear-gradient(#eee, #bbb); font-size: 5px; line-height: 7px; text-align: center; }
.hbar .r { margin-left: auto; }
.split { width: 19px; height: 3px; flex: none; margin: 2px auto; border: 1px solid #aaa; background: #eee; }
.nav h4 { height: 13px; flex: none; display: flex; justify-content: space-between; align-items: center; padding-left: 4px; border-bottom: 1px solid #999; background: linear-gradient(#e5e5e5, #c9c9c9); }
.nav h4 svg { width: 14px; height: 10px; border-left: 1px solid #999; }
.nav h4 path, .dialog legend path { fill: none; stroke: #444; }
.view { flex: 1; min-width: 0; position: relative; border: 1px solid #b03a3a; background: #fff; }
.scene { width: 100%; height: 100%; }
.scene text { font: 8px "Liberation Sans", sans-serif; }
.scene .ax { font-size: 7px; }
.drawer { position: absolute; right: 0; top: 42px; width: 10px; height: 45px; background: #454746; border-radius: 3px 0 0 3px; }
.drawer svg { width: 8px; height: 12px; fill: none; stroke: #eee; }
.row.bottom { background: #ddd; }

.dialog { position: absolute; z-index: 2; left: 114px; top: 0; width: 172px; padding: 3px 4px 0; background: #d9d9d9; border: 1px solid #999; border-top: 0; border-bottom: 5px solid #151515; border-radius: 2px 2px 4px 4px; }
.dialog fieldset { display: block; min-width: 0; }
.dialog legend { display: flex; width: 100%; height: 14px; align-items: center; justify-content: space-between; padding-left: 3px; font-weight: bold; background: linear-gradient(#f2f2f2, #d9d9d9); border-bottom: 1px solid #999; }
.dialog legend svg { width: 14px; height: 12px; border-left: 1px solid #bbb; }
.dialog .body { background: #c9c9c9; padding: 3px 5px; }
.dialog .type { height: 21px; padding-top: 4px; }
.dialog .type select { font-size: 8px; }
.target { height: 18px; margin: 1px 0 2px; display: flex; align-items: center; gap: 3px; border-radius: 2px; background: linear-gradient(90deg, #e5a068, #dfa878 30%, #c9c9c9 90%); }
.target button { width: 18px; height: 18px; margin-left: auto; border: 1px solid #d27b49; border-radius: 2px; background: #f8d2b2; }
.target button svg { width: 14px; height: 14px; }
.tick { width: 8px; height: 8px; fill: none; stroke: #24ad31; stroke-width: 2; }
.dialog .cutter { display: grid; grid-template-columns: 1fr 62px; row-gap: 2px; align-items: center; color: #222; padding: 3px 5px 5px 4px; }
.cutter .pickbox select { font: 6px/8px "Liberation Mono", monospace; padding-right: 9px; text-overflow: clip; }
.cutter .hot select { background: #2f86e0; color: #bfe6ff; }
.rev { justify-self: end; width: 12px; height: 12px; border: 1px solid #888; background: #eee; border-radius: 2px; }
.rev svg { width: 10px; height: 10px; }
.more { height: 8px; display: flex; align-items: center; justify-content: center; background: linear-gradient(#fff, #ddd); border-bottom: 1px solid #999; }
.more svg { width: 26px; height: 6px; fill: none; stroke: #111; stroke-width: 2; }
.acts { display: flex; justify-content: flex-end; gap: 5px; padding: 6px 6px 7px; }
.acts button { width: 30px; height: 11px; border: 1px solid #777; border-radius: 2px; background: linear-gradient(#fff, #ccc); }
.acts .ok { background: linear-gradient(#d5f3cc, #7dcc6c); border-color: #3e7d36; }
.spot { position: absolute; left: 109px; top: 102px; width: 28px; height: 28px; border-radius: 50%; background: #e5e200; mix-blend-mode: multiply; pointer-events: none; }
.cursor { position: absolute; left: 123px; top: 115px; width: 8px; height: 12px; fill: #fff; stroke: #555; }

.caption { position: absolute; left: 0; right: 0; bottom: 20px; height: 29px; display: flex; align-items: center; justify-content: center; background: linear-gradient(#0005, #0008); }
.caption::before { content: ""; position: absolute; left: 20px; top: 0; width: 6px; height: 28px; background: #5b9bd0aa; }
.caption span { font-size: 10px; color: #ddd; }
.caption button { position: absolute; right: 2px; top: 3px; }
.caption svg { width: 8px; height: 8px; stroke: #ddd; }
.seek { position: absolute; left: 0; right: 0; bottom: 0; height: 20px; display: flex; align-items: center; gap: 4px; padding: 0 3px 0 5px; background: linear-gradient(#0005, #0009); }
.seek svg { width: 10px; height: 8px; fill: #fff; }
.seek input { appearance: none; flex: 1; min-width: 0; height: 14px; margin: 0; background: transparent; }
.seek input::-webkit-slider-runnable-track { height: 4px; background: linear-gradient(90deg, #f8cd87 81%, #aaa 81%); }
.seek input::-webkit-slider-thumb { appearance: none; width: 14px; height: 6px; margin-top: -1px; border-radius: 3px; background: #fff; }

.controls { height: 30px; flex: none; padding: 0 16px 8px 25px; display: grid; grid-template-columns: 1fr auto 1fr; align-items: center; border-top: 3px solid #1f2223; background: linear-gradient(#08253a, #101112 3px); color: #eee; }
.time { font: 10px/14px "Open Sans", "Noto Sans", sans-serif; }
.mid { display: flex; gap: 12px; align-items: center; margin-right: 28px; }
.mid svg { width: 16px; height: 16px; fill: #fff; }
.mid .off { opacity: .5; margin-left: 12px; }
.mid button:nth-child(2) { margin-right: 11px; }
.end { display: flex; justify-content: flex-end; gap: 11px; font-size: 11px; }
.end button { width: 14px; height: 16px; }
.end svg { width: 14px; height: 14px; fill: none; stroke: #eee; }
```
